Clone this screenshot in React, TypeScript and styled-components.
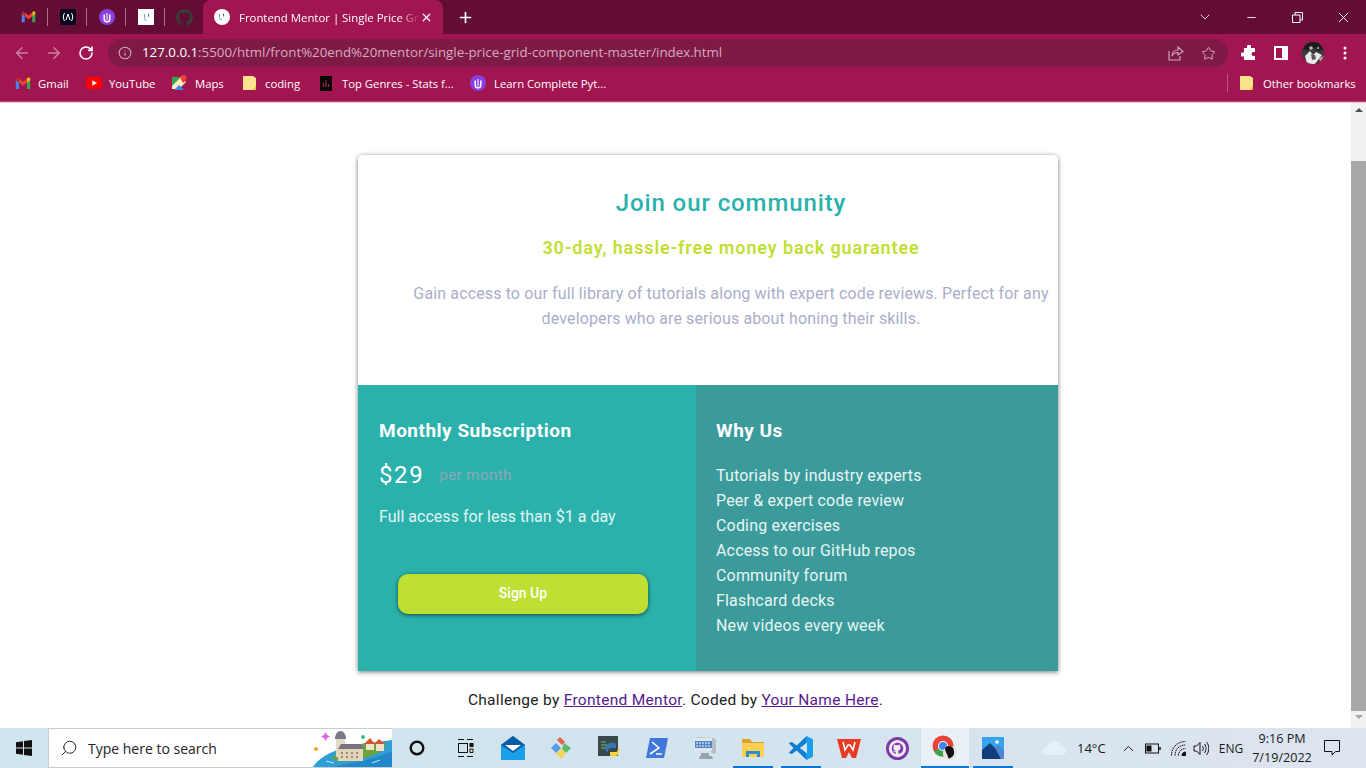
import React from "react";
import styled, { createGlobalStyle } from "styled-components";
import { ArrowLeft, ArrowRight, RotateCw, Info, Star, X, Plus, Minus, ChevronDown, ChevronUp, Search } from "lucide-react";

const Global = createGlobalStyle`
  html, body { margin: 0; padding: 0; height: 100%; overflow: hidden; background: #fff; }
  * { box-sizing: border-box; }
  #root { height: 100%; }
`;
const uiFont = `"Open Sans", "Noto Sans", sans-serif`;
const pageFont = `Roboto, "Liberation Sans", sans-serif`;

const Screen = styled.div`display:flex;flex-direction:column;height:768px;width:1366px;overflow:hidden;`;
const TabStrip = styled.div`display:flex;align-items:stretch;height:34px;background:#630c34;padding-left:9px;flex:none;`;
const PinnedTab = styled.div<{ $sep?: boolean }>`
  width:39px;display:flex;align-items:center;justify-content:center;position:relative;
  ${p => p.$sep ? `&::after{content:"";position:absolute;right:0;top:8px;height:18px;width:1px;background:#a9728a;}` : ""}
`;
const ActiveTab = styled.div`
  width:240px;margin-left:-1px;background:#a11550;border-radius:8px 8px 0 0;display:flex;align-items:center;
  padding-left:11px;color:#fff;font:11.4px ${uiFont};
`;
const TabFavicon = styled.div`width:16px;height:16px;border-radius:50%;background:#fff;flex:none;display:flex;align-items:center;justify-content:center;`;
const TabTitle = styled.span`
  margin-left:9px;width:181px;white-space:nowrap;overflow:hidden;flex:none;
  -webkit-mask-image:linear-gradient(90deg,#000 88%,transparent);mask-image:linear-gradient(90deg,#000 88%,transparent);
`;
const TabClose = styled.div`margin-left:0;display:flex;`;
const NewTab = styled.div`width:44px;display:flex;align-items:center;justify-content:center;color:#fff;`;
const Spacer = styled.div`flex:1;`;
const WinButton = styled.div`width:46px;display:flex;align-items:center;justify-content:center;color:#fff;`;

const Toolbar = styled.div`display:flex;align-items:center;height:34px;background:#a11550;padding:4px 5px 0 6px;flex:none;`;
const NavButton = styled.div<{ $dim?: boolean }>`width:32px;height:28px;display:flex;align-items:center;justify-content:center;color:${p => p.$dim ? "#cf7f9f" : "#fff"};flex:none;`;
const Omnibox = styled.div`
  flex:1;height:28px;margin-left:6px;margin-right:5px;border-radius:14px;background:#7f1a47;display:flex;align-items:center;padding:0 4px 0 10px;
  font:13.3px/26px ${uiFont};color:#d8a9be;white-space:nowrap;
`;
const Host = styled.span`color:#fff;`;
const Url = styled.span`margin-left:10px;flex:1;height:28px;`;
const OmniIcon = styled.div`width:32px;display:flex;justify-content:center;color:#d8a9be;flex:none;`;
const Avatar = styled.div`width:22px;height:22px;border-radius:50%;overflow:hidden;display:flex;`;

const BookmarkBar = styled.div`display:flex;align-items:center;height:32px;background:#a11550;padding:0 11px 2px 15px;flex:none;color:#fff;font:11.3px ${uiFont};`;
const Bookmark = styled.div<{ $w: number }>`display:flex;align-items:center;white-space:nowrap;width:${p => p.$w}px;flex:none;`;
const BmIcon = styled.div<{ $gap: number }>`display:flex;margin-right:${p => p.$gap}px;flex:none;`;
const BmSep = styled.div`width:1px;height:18px;background:#bb5a80;margin-right:12px;`;
const ChromeEdge = styled.div`height:3px;background:linear-gradient(#a11550 0 1px,#b9476f 1px 2px,#e9c4d2 2px);flex:none;`;

const Viewport = styled.div`flex:1;display:flex;min-height:0;background:#fff;`;
const Page = styled.main`flex:1;display:flex;flex-direction:column;align-items:center;padding-top:52px;font-family:${pageFont};`;
const Card = styled.section`
  width:700px;height:516px;margin-left:65px;border-radius:5px 5px 0 0;box-shadow:0 1px 5px rgba(0,0,0,.55);display:flex;flex-direction:column;overflow:hidden;flex:none;
`;
const Intro = styled.div`height:230px;background:#fff;padding:31px 4px 0 50px;text-align:center;`;
const Title = styled.h1`margin:0;font:500 24px/34px ${pageFont};letter-spacing:.9px;color:#2ab1ac;`;
const Guarantee = styled.h2`margin:14px 0 0;font:600 18px/28px ${pageFont};letter-spacing:.87px;color:#bfdf32;`;
const Lead = styled.p`margin:19px 0 0;font:400 16px/25px ${pageFont};letter-spacing:.13px;color:#a9aec9;`;
const Columns = styled.div`display:flex;flex:1;color:#fff;`;
const Subscribe = styled.div`width:338px;background:#2ab1ac;padding:32px 21px 0;display:flex;flex-direction:column;`;
const Why = styled.div`flex:1;background:#3b9b9b;padding:32px 20px 0;`;
const ColTitle = styled.h3`margin:0;font:700 19px/27px ${pageFont};letter-spacing:.5px;`;
const PriceRow = styled.div`display:flex;align-items:center;margin-top:15px;height:32px;`;
const Price = styled.span`font:400 24px/32px ${pageFont};letter-spacing:1.6px;`;
const Per = styled.span`margin-left:15px;font:400 15.5px/32px ${pageFont};letter-spacing:.2px;color:#8fa6b8;`;
const Access = styled.p`margin:13px 0 0;font:400 16px/25px ${pageFont};letter-spacing:.02px;color:#e3f5f3;`;
const SignUp = styled.button`
  width:250px;height:40px;margin:45px 0 0 19px;padding:0 0 2px;border:0;border-radius:10px;background:#bfdf32;color:#fff;font:500 14px ${pageFont};box-shadow:0 1px 4px rgba(0,0,0,.6);
`;
const Features = styled.ul`list-style:none;margin:19px 0 0;padding:0;font:400 16px/25px ${pageFont};letter-spacing:.17px;color:#e8f5f4;`;
const Credit = styled.div`margin:19px 0 0;font:400 15.5px/20px ${pageFont};letter-spacing:.3px;color:#222;a{color:#551a8b;}`;

const Scrollbar = styled.div`width:15px;flex:none;background:#f1f1f1;display:flex;flex-direction:column;align-items:center;padding-top:5px;`;
const ScrollThumb = styled.div`width:15px;height:550px;margin-top:49px;background:#a8a8a8;`;
const ArrowUp = styled.div`width:0;height:0;border:4px solid transparent;border-top:0;border-bottom:4px solid #505050;`;
const ArrowDown = styled.div`width:0;height:0;margin-top:4px;border:4px solid transparent;border-bottom:0;border-top:4px solid #a3a3a3;`;

const Taskbar = styled.footer`height:40px;flex:none;display:flex;align-items:stretch;background:linear-gradient(90deg,#cfe5ef,#d2e4ee 50%,#dde4ef);font:12px ${uiFont};color:#1a1a1a;`;
const StartCell = styled.div`width:48px;display:flex;align-items:center;justify-content:center;flex:none;`;
const SearchBox = styled.div`width:344px;background:#fff;border:1px solid #c9cdd0;border-right:0;display:flex;align-items:center;padding-left:11px;position:relative;overflow:hidden;font:14px ${uiFont};color:#222;flex:none;`;
const SearchText = styled.span`margin-left:10px;`;
const Island = styled.div`position:absolute;right:0;top:0;bottom:0;display:flex;`;
const TaskIcons = styled.div`display:flex;flex:none;margin-left:1px;`;
const TaskCell = styled.div<{ $active?: boolean; $run?: boolean }>`
  width:48px;display:flex;align-items:center;justify-content:center;position:relative;flex:none;
  background:${p => p.$active ? "#e9f0f6" : "transparent"};
  ${p => (p.$run || p.$active) ? `&::after{content:"";position:absolute;bottom:0;height:2px;left:${p.$active ? 0 : 4}px;right:${p.$active ? 0 : 4}px;background:#0a78d4;}` : ""}
`;
const Tray = styled.div`display:flex;align-items:center;flex:1;padding-left:16px;`;
const Temp = styled.span`font-size:13px;width:40px;flex:none;`;
const TrayIcon = styled.div<{ $w: number }>`width:${p => p.$w}px;display:flex;justify-content:center;flex:none;`;
const Clock = styled.div`width:64px;text-align:center;line-height:19px;font-size:12.6px;white-space:nowrap;flex:none;`;

const Gmail = ({ s = 16 }: { s?: number }) => (
  <svg width={s} height={s * .8} viewBox="0 0 20 16"><path d="M1 15V3l4 3v9z" fill="#4285f4" /><path d="M19 15V3l-4 3v9z" fill="#34a853" /><path d="M15 1.600V7l4-3V2c0-1.600-2-2.200-4-.4z" fill="#fbbc04" /><path d="M5 7V2l5 4 5-4v5l-5 4z" fill="#ea4335" /><path d="M1 4V2c0-1.200 2-2 4 0v5z" fill="#c5221f" /></svg>
);
const Uicon = ({ s = 16 }: { s?: number }) => (
  <svg width={s} height={s} viewBox="0 0 16 16"><circle cx="8" cy="8" r="8" fill="#8a3fe0" /><path d="M5.200 5.500v4.600a2.800 2.800 0 0 0 5.600 0V5.500" fill="none" stroke="#fff" strokeWidth="1.500" /><path d="M8 4v7" stroke="#fff" strokeWidth="1.100" /></svg>
);
const Folder = () => (
  <svg width="13" height="16" viewBox="0 0 13 16"><path d="M0 1h10l3 2v12H0z" fill="#fbe38e" /><path d="M10 15h3V10z" fill="#e8c13f" /></svg>
);
const Fcc = () => (
  <svg width="16" height="16" viewBox="0 0 16 16"><rect width="16" height="16" rx="1" fill="#0a0a23" /><path d="M4.500 4C3 6.500 3 9.500 4.500 12M11.500 4c1.500 2.500 1.500 5.500 0 8" stroke="#fff" fill="none" /><path d="M6 11l2-6 2 6" stroke="#fff" fill="none" /></svg>
);
const Mentor = () => (
  <svg width="16" height="16" viewBox="0 0 16 16"><rect width="16" height="16" fill="#fff" /><path d="M6.500 5v4.500a2 2 0 0 0 2 2" stroke="#8aa0d8" fill="none" /><path d="M10.500 4.500v3" stroke="#5f7fb0" /><path d="M12 7L10 8" stroke="#bbb" /></svg>
);
const Github = ({ s = 20, c = "#3b3b3b" }: { s?: number; c?: string }) => (
  <svg width={s} height={s} viewBox="0 0 16 16" fill={c}><path d="M8 0C3.580 0 0 3.580 0 8c0 3.540 2.290 6.530 5.470 7.590.4.070.55-.170.55-.380 0-.190-.010-.820-.010-1.490-2.010.370-2.530-.490-2.690-.940-.090-.230-.480-.940-.820-1.130-.280-.150-.680-.520-.010-.530.630-.010 1.080.580 1.230.820.720 1.210 1.870.870 2.330.660.070-.520.280-.870.510-1.070-1.780-.200-3.640-.890-3.640-3.950 0-.870.310-1.590.820-2.150-.080-.200-.360-1.020.080-2.120 0 0 .670-.210 2.200.820a7.420 7.420 0 0 1 4 0c1.530-1.040 2.200-.820 2.200-.820.440 1.100.160 1.920.080 2.120.510.560.820 1.270.820 2.150 0 3.070-1.870 3.750-3.650 3.950.290.250.540.730.540 1.480 0 1.070-.010 1.930-.010 2.200 0 .210.150.460.550.380A8.010 8.010 0 0 0 16 8c0-4.420-3.580-8-8-8z" /></svg>
);
const Youtube = () => (
  <svg width="16" height="12" viewBox="0 0 16 12"><rect width="16" height="12" rx="3" fill="#f00" /><path d="M6.300 3.300v5.400L11 6z" fill="#fff" /></svg>
);
const Maps = () => (
  <svg width="15" height="16" viewBox="0 0 15 16"><path d="M0 2h9L0 11z" fill="#34a853" /><path d="M0 11L9 2l5 5-7 7H0z" fill="#fbf2c0" /><path d="M2 15l5-5 5 5z" fill="#4285f4" /><path d="M11.500 0a3 3 0 0 0-3 3c0 2 3 5 3 5s3-3 3-5a3 3 0 0 0-3-3z" fill="#ea4335" /></svg>
);
const Stats = () => (
  <svg width="12" height="15" viewBox="0 0 12 15"><rect width="12" height="15" fill="#070707" /><path d="M3.500 11V7M6 11V4M8.500 11V8" stroke="#a8224e" strokeWidth="1.200" /></svg>
);
const Share = () => (
  <svg width="16" height="16" viewBox="0 0 16 16" fill="none" stroke="currentColor" strokeWidth="1.100"><path d="M1 6v9h11v-4" /><path d="M4 11c0-4 3-6 6-6V2l5 4.500L10 10V7.500c-3 0-5 1-6 3.500z" /></svg>
);
const Puzzle = () => (
  <svg width="16" height="16" viewBox="0 0 16 16" fill="#fff"><path d="M6 1.500a2 2 0 0 1 4 0V3h4v4h-1.500a2 2 0 0 0 0 4H14v4H3v-3.500H1.500a2 2 0 0 1 0-4H3V3h3z" /></svg>
);
const Panel = () => (
  <svg width="14" height="14" viewBox="0 0 14 14"><path d="M0 0h14v14H0z" fill="#fff" /><path d="M2 2h6v10H2z" fill="#a11550" /></svg>
);
const Profile = () => (
  <svg width="22" height="22" viewBox="0 0 22 22"><rect width="22" height="22" fill="#3a3a3a" /><path d="M0 0h22v7l-6 2-4-3-6 2-6-1z" fill="#1c1c1c" /><path d="M5 22l-2-8 5-5 3 4 3-3 6 3-4 5-3 4z" fill="#e8e8e8" /><path d="M9 12l4 1 1 4-4 1z" fill="#555" /><circle cx="9" cy="6" r="1.800" fill="#bbb" /><circle cx="16" cy="6" r="1.300" fill="#888" /><path d="M17 16l5-2v4l-4 2z" fill="#aaa" /></svg>
);
const Dots = () => (
  <svg width="4" height="14" viewBox="0 0 4 14" fill="#fff"><circle cx="2" cy="2" r="1.500" /><circle cx="2" cy="7" r="1.500" /><circle cx="2" cy="12" r="1.500" /></svg>
);
const Restore = () => (
  <svg width="11" height="11" viewBox="0 0 11 11" fill="none" stroke="#fff"><path d="M.5 3h7.500v7.500H.500z" /><path d="M3 3V.5h7.500V8H8" /></svg>
);
const Windows = () => (
  <svg width="16" height="16" viewBox="0 0 16 16" fill="#111"><path d="M0 2.300l7-1V7.500H0zM8 1.100l8-1.100V7.500H8zM0 8.500h7v6.200l-7-1zM8 8.500h8V16l-8-1.100z" /></svg>
);
const IslandArt = () => (
  <svg width="80" height="38" viewBox="0 0 80 38">
    <path d="M1 38C8 26 30 17 56 14c10-1 18-2 24-3v27z" fill="#2f9fd6" />
    <path d="M18 38c16-3 40-6 62-16v16z" fill="#1c7fc4" opacity=".7" />
    <path d="M20 30c6-10 30-18 50-16 6 1 4 6-4 10-14 6-34 12-46 6z" fill="#6ea33a" />
    <path d="M24 10h9v18h-9z" fill="#e4dbc6" />
    <path d="M23 10c0-4 2-8 5.500-8S34 6 34 10z" fill="#7a7786" />
    <path d="M26 20h25v12H26z" fill="#e3d6b8" />
    <path d="M26 20l3-5h20l3 5z" fill="#7a7280" />
    <path d="M29 24h2M34 24h2M39 24h2M44 24h2M29 28h2M34 28h2M39 28h2M44 28h2" stroke="#8a7a65" strokeWidth="1.500" />
    <path d="M54 14h8v7h-8zM64 15h8v7h-8z" fill="#f0e1c8" />
    <path d="M52 15l6-6 5 6zM62 15l5-5 6 5z" fill="#d4552d" />
    <path d="M12 6l1.500-3 1.500 3 3 1.500-3 1.500-1.500 3-1.500-3-3-1.500z" fill="#e25fe0" />
    <circle cx="51" cy="8" r="2" fill="#3bbd6b" /><circle cx="4" cy="20" r="2" fill="#f2a71b" />
    <path d="M60 34l8-3M14 32l8 2" stroke="#bfe6f7" strokeWidth="1" />
  </svg>
);
const Cortana = () => <svg width="16" height="16" viewBox="0 0 16 16"><circle cx="8" cy="8" r="6.300" fill="none" stroke="#111" strokeWidth="2.400" /></svg>;
const TaskView = () => (
  <svg width="17" height="18" viewBox="0 0 17 18" fill="none" stroke="#111"><path d="M1 .5h6M10 .5h6M1 17.500h6M10 17.500h6" /><rect x="1.500" y="4.500" width="9" height="9" /><rect x="13" y="4.500" width="3" height="3" fill="#111" /><path d="M13 10h3v3.500h-3z" /></svg>
);
const Mail = () => (
  <svg width="24" height="24" viewBox="0 0 24 24"><path d="M0 9l12-9 12 9v15H0z" fill="#0f78c8" /><path d="M0 9l12 9 12-9-12-9z" fill="#0a5da5" /><path d="M4 9h16l-8 6z" fill="#fff" /><path d="M0 9l12 8 12-8v15H0z" fill="#1aa0e8" /></svg>
);
const Kraken = () => (
  <svg width="24" height="24" viewBox="0 0 24 24"><path d="M2 12l5-5 5 5-5 5z" fill="#5a9be8" /><path d="M8 4l3-3 5 5-3 3z" fill="#e8604c" /><path d="M15 7l7 5-5 5-4-4z" fill="#5dbb63" /><path d="M7 17l5-4 5 4-5 6z" fill="#f4d35e" /></svg>
);
const Python = () => (
  <svg width="22" height="24" viewBox="0 0 22 24"><rect width="20" height="20" fill="#39484a" /><path d="M3 6h5M3 9h7M3 12h4" stroke="#6fbf73" /><path d="M10 8c0-2 8-2 8 0v4h-6c-2 0-2 4-2 4s-3 0-3-4 3-4 3-4z" fill="#3776ab" /><path d="M20 12c2 0 2 4 0 6 0 3-8 3-8 1v-3h6c2 0 2-4 2-4z" fill="#ffd43b" /></svg>
);
const PowerShell = () => (
  <svg width="24" height="24" viewBox="0 0 24 24"><path d="M5 2h18l-4 20H1z" fill="#3f78d8" /><path d="M7 6l7 6-9 6M11 18h6" stroke="#fff" strokeWidth="1.600" fill="none" /></svg>
);
const Device = () => (
  <svg width="24" height="26" viewBox="0 0 24 26"><path d="M3 2l18 1 2 2v13l-3 1z" fill="#b6bfc9" /><path d="M1 3h18v13H1z" fill="#dfe6ee" /><path d="M2 6h17v7H2z" fill="#4f86c6" /><path d="M3 8h15M3 11h15" stroke="#fff" strokeDasharray="2 1" /><path d="M8 18h8v3h3l1 3H6l1-3h1z" fill="#9aa1a8" /></svg>
);
const Explorer = () => (
  <svg width="22" height="20" viewBox="0 0 22 20"><path d="M0 1h8l2 3h12v4H0z" fill="#d9a233" /><path d="M0 5h22v14H0z" fill="#fcd053" /><path d="M4 13h14v6h-3v-3H7v3H4z" fill="#2f8fce" /></svg>
);
const VSCode = () => (
  <svg width="24" height="24" viewBox="0 0 100 100"><path d="M71 98a6 6 0 0 0 4.500-.2l20.600-9.900A6 6 0 0 0 100 82.500V17.500a6 6 0 0 0-3.900-5.400L75.500 2.200A6 6 0 0 0 71 2L32 40 12 25l-8 2L0 31l19 19L0 69l4 4 8 2 20-15z" fill="#0f7fd0" /><path d="M71 2a6 6 0 0 1 4.500.2l20.600 9.900A6 6 0 0 1 100 17.500v65a6 6 0 0 1-3.900 5.400L75.500 97.800A6 6 0 0 1 71 98z" fill="#1c9ef0" /><path d="M75 27v46L45 50z" fill="#d2e4ee" /></svg>
);
const Wps = () => (
  <svg width="24" height="19" viewBox="0 0 24 19"><path d="M0 0h24l-5 19h-4l-3-6-3 6H5z" fill="#ea3a24" /><path d="M6 3l2 8 3-5h2l3 5 2-8" stroke="#fff" strokeWidth="1.600" fill="none" /></svg>
);
const GithubDesk = () => (
  <svg width="23" height="23" viewBox="0 0 24 24"><circle cx="12" cy="12" r="10.500" fill="#f2ecf6" stroke="#7d3aa5" strokeWidth="3" /><g transform="translate(6 6) scale(.75)"><path d="M8 0C3.600 0 0 3.600 0 8c0 3.500 2.300 6.500 5.500 7.600V13c-2 .400-2.500-.500-2.700-.900-.300-.700-.800-1.100-1-1.200-.300-.200-.700-.500 0-.500.600 0 1.100.600 1.200.800.700 1.200 1.900.900 2.300.700.100-.500.300-.900.500-1.100C4 10.500 2.200 9.900 2.200 6.800c0-.900.300-1.600.800-2.100-.100-.200-.400-1 .100-2.100 0 0 .700-.200 2.200.800a7.400 7.400 0 0 1 4 0c1.500-1 2.200-.800 2.200-.800.400 1.100.200 1.900.100 2.100.500.500.800 1.200.800 2.100 0 3.100-1.900 3.700-3.700 3.900.300.300.600.700.600 1.500v2.200l.1 1.200A8 8 0 0 0 16 8c0-4.400-3.600-8-8-8z" fill="#7d3aa5" /></g></svg>
);
const ChromeBadge = () => (
  <svg width="26" height="26" viewBox="0 0 26 26"><circle cx="11" cy="11" r="10.500" fill="#ea4335" /><path d="M11 11L1.900 16.300A10.500 10.500 0 0 0 11 21.500c1 0 2 0 3-.4z" fill="#34a853" /><path d="M11 11h10.500A10.500 10.500 0 0 1 11 21.500z" fill="#fbbc04" /><circle cx="11" cy="11" r="5" fill="#fff" /><circle cx="11" cy="11" r="4" fill="#4285f4" /><circle cx="18" cy="18" r="7" fill="#e6e6e6" /><path d="M13 13c3-3 7-2 8 0s2 5 0 8c-3 3-5 3-5 1s-3-5-3-9z" fill="#111" /></svg>
);
const Photos = () => (
  <svg width="22" height="22" viewBox="0 0 22 22"><rect width="22" height="22" fill="#35a4ec" /><path d="M0 22v-9l8-7 5 5 3-2 6 6v7z" fill="#123e7c" /><path d="M13 11l3-2 6 6v7h-3z" fill="#4f86d8" /><circle cx="15" cy="5" r="1.800" fill="#fff" /></svg>
);
const Cloud = () => (
  <svg width="24" height="16" viewBox="0 0 24 16" fill="#e6f0f8"><path d="M4 15a4 4 0 0 1 0-8c1-4 4-6 7-6s6 2 7 6a4 4 0 0 1 2 8z" /></svg>
);
const Battery = () => (
  <svg width="16" height="11" viewBox="0 0 16 11" fill="none" stroke="#111"><rect x=".5" y="1" width="13" height="9" /><rect x="2" y="3" width="4" height="5" fill="#111" /><path d="M15 4v3" strokeWidth="1.500" /></svg>
);
const Signal = () => (
  <svg width="15" height="15" viewBox="0 0 15 15" fill="none" stroke="#111"><path d="M.5 14.500c0-8 6-14 14-14M4 14.500c0-6 4-10.500 10.500-10.500M7.500 14.500c0-4 3-7 7-7" strokeDasharray="1.500 .6" /><path d="M11 14.500c0-2 1.500-3.500 3.500-3.500v3.500z" fill="#111" /></svg>
);
const Speaker = () => (
  <svg width="16" height="15" viewBox="0 0 16 15" fill="none" stroke="#111"><path d="M1 5h2.500L7 1.500v12L3.500 10H1z" /><path d="M9.500 5c1 1.500 1 3.500 0 5M11.500 3c2 2.500 2 6.500 0 9M13.500 1c3 3.500 3 9.500 0 13" /></svg>
);
const Notify = () => (
  <svg width="16" height="16" viewBox="0 0 16 16" fill="none" stroke="#111"><path d="M.5 .5h15v11h-4L8 15v-3.500H.5z" /></svg>
);

const features = ["Tutorials by industry experts", "Peer & expert code review", "Coding exercises", "Access to our GitHub repos", "Community forum", "Flashcard decks", "New videos every week"];
const bookmarks = [
  { w: 71, gap: 7, icon: <Gmail />, label: "Gmail" },
  { w: 86, gap: 7, icon: <Youtube />, label: "YouTube" },
  { w: 71, gap: 8, icon: <Maps />, label: "Maps" },
  { w: 77, gap: 9, icon: <Folder />, label: "coding" },
  { w: 150, gap: 10, icon: <Stats />, label: "Top Genres - Stats f..." },
];

export default function App() {
  return (
    <Screen>
      <Global />
      <TabStrip>
        <PinnedTab $sep><Gmail s={15} /></PinnedTab>
        <PinnedTab $sep><Fcc /></PinnedTab>
        <PinnedTab $sep><Uicon /></PinnedTab>
        <PinnedTab $sep><Mentor /></PinnedTab>
        <PinnedTab><Github s={17} /></PinnedTab>
        <ActiveTab>
          <TabFavicon><svg width="10" height="10" viewBox="0 0 10 10" fill="none"><path d="M2.500 2v3.500a2.500 2.500 0 0 0 2.500 2.500" stroke="#8aa0d8" /><path d="M6.500 1.500v3" stroke="#667" /></svg></TabFavicon>
          <TabTitle>Frontend Mentor | Single Price Grid Component</TabTitle>
          <TabClose><X size={13} strokeWidth={2.2} /></TabClose>
        </ActiveTab>
        <NewTab><Plus size={17} strokeWidth={2.4} /></NewTab>
        <Spacer />
        <WinButton><ChevronDown size={16} strokeWidth={1.2} /></WinButton>
        <WinButton><Minus size={13} strokeWidth={1.6} /></WinButton>
        <WinButton><Restore /></WinButton>
        <WinButton><X size={17} strokeWidth={1.3} /></WinButton>
      </TabStrip>
      <Toolbar>
        <NavButton $dim><ArrowLeft size={18} strokeWidth={2} /></NavButton>
        <NavButton $dim><ArrowRight size={18} strokeWidth={2} /></NavButton>
        <NavButton><RotateCw size={16} strokeWidth={2.4} /></NavButton>
        <Omnibox>
          <Info size={14} strokeWidth={1.8} />
          <Url><Host>127.0.0.1</Host>:5500/html/front%20end%20mentor/single-price-grid-component-master/index.html</Url>
          <OmniIcon><Share /></OmniIcon>
          <OmniIcon><Star size={15} strokeWidth={1.6} /></OmniIcon>
        </Omnibox>
        <NavButton><Puzzle /></NavButton>
        <NavButton><Panel /></NavButton>
        <NavButton><Avatar><Profile /></Avatar></NavButton>
        <NavButton><Dots /></NavButton>
      </Toolbar>
      <BookmarkBar>
        {bookmarks.map(b => <Bookmark key={b.label} $w={b.w}><BmIcon $gap={b.gap}>{b.icon}</BmIcon>{b.label}</Bookmark>)}
        <Bookmark $w={140}><BmIcon $gap={8}><Uicon /></BmIcon>Learn Complete Pyt...</Bookmark>
        <Spacer />
        <BmSep />
        <Bookmark $w={115}><BmIcon $gap={10}><Folder /></BmIcon>Other bookmarks</Bookmark>
      </BookmarkBar>
      <ChromeEdge />
      <Viewport>
        <Page>
          <Card>
            <Intro>
              <Title>Join our community</Title>
              <Guarantee>30-day, hassle-free money back guarantee</Guarantee>
              <Lead>Gain access to our full library of tutorials along with expert code reviews. Perfect for any developers who are serious about honing their skills.</Lead>
            </Intro>
            <Columns>
              <Subscribe>
                <ColTitle>Monthly Subscription</ColTitle>
                <PriceRow><Price>$29</Price><Per>per month</Per></PriceRow>
                <Access>Full access for less than $1 a day</Access>
                <SignUp>Sign Up</SignUp>
              </Subscribe>
              <Why>
                <ColTitle>Why Us</ColTitle>
                <Features>{features.map(f => <li key={f}>{f}</li>)}</Features>
              </Why>
            </Columns>
          </Card>
          <Credit>Challenge by <a href="#fm">Frontend Mentor</a>. Coded by <a href="#me">Your Name Here</a>.</Credit>
        </Page>
        <Scrollbar>
          <ArrowUp />
          <ScrollThumb />
          <ArrowDown />
        </Scrollbar>
      </Viewport>
      <Taskbar>
        <StartCell><Windows /></StartCell>
        <SearchBox>
          <Search size={18} strokeWidth={1.3} style={{ transform: "scaleX(-1)" }} />
          <SearchText>Type here to search</SearchText>
          <Island><IslandArt /></Island>
        </SearchBox>
        <TaskIcons>
          <TaskCell><Cortana /></TaskCell>
          <TaskCell><TaskView /></TaskCell>
          <TaskCell><Mail /></TaskCell>
          <TaskCell><Kraken /></TaskCell>
          <TaskCell><Python /></TaskCell>
          <TaskCell><PowerShell /></TaskCell>
          <TaskCell><Device /></TaskCell>
          <TaskCell $run><Explorer /></TaskCell>
          <TaskCell $run><VSCode /></TaskCell>
          <TaskCell><Wps /></TaskCell>
          <TaskCell><GithubDesk /></TaskCell>
          <TaskCell $active><ChromeBadge /></TaskCell>
          <TaskCell $run><Photos /></TaskCell>
        </TaskIcons>
        <Tray>
          <TrayIcon $w={44}><Cloud /></TrayIcon>
          <Temp>14°C</Temp>
          <TrayIcon $w={23}><ChevronUp size={17} strokeWidth={1.4} /></TrayIcon>
          <TrayIcon $w={26}><Battery /></TrayIcon>
          <TrayIcon $w={24}><Signal /></TrayIcon>
          <TrayIcon $w={22}><Speaker /></TrayIcon>
          <TrayIcon $w={38}>ENG</TrayIcon>
          <Clock>9:16 PM<br />7/19/2022</Clock>
          <TrayIcon $w={36}><Notify /></TrayIcon>
        </Tray>
      </Taskbar>
    </Screen>
  );
}
